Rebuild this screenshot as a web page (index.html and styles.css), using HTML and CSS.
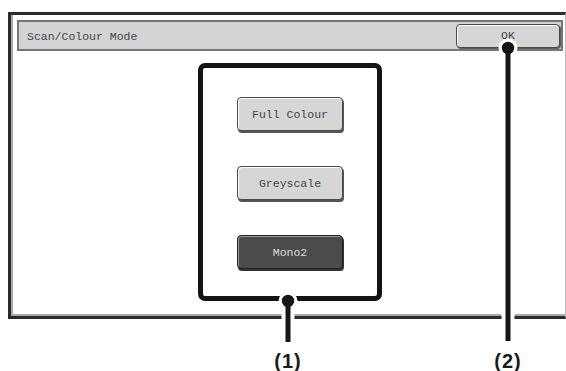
FILE: index.html
```html
<!DOCTYPE html>
<html lang="en">
<head>
	<meta charset="UTF-8">
	<title>Scan/Colour Mode</title>
	<link rel="stylesheet" href="styles.css">
</head>
<body>
	<div id="page">
		<div class="screen">
			<div class="titlebar">
				<span class="title">Scan/Colour Mode</span>
				<span class="btn ok">OK</span>
			</div>
			<div class="stage">
				<div class="group">
					<span class="btn mode">Full Colour</span>
					<span class="btn mode">Greyscale</span>
					<span class="btn mode selected">Mono2</span>
				</div>
			</div>
		</div>

		<!-- callout lines drawn over the screen -->
		<svg class="callouts" width="566" height="371" viewBox="0 0 566 371">
			<g stroke="#fff" stroke-width="13">
				<line x1="288" y1="301" x2="288" y2="342"/>
				<line x1="508" y1="48" x2="508" y2="341"/>
			</g>
			<circle cx="288" cy="301" r="9.5" fill="#fff"/>
			<circle cx="508" cy="48" r="9.5" fill="#fff"/>
			<g stroke="#161616" stroke-width="5">
				<line x1="288" y1="301" x2="288" y2="342"/>
				<line x1="508" y1="48" x2="508" y2="341"/>
			</g>
			<circle cx="288" cy="301" r="6.2" fill="#161616"/>
			<circle cx="508" cy="48" r="6.2" fill="#161616"/>
		</svg>
		<span class="label label1">(1)</span>
		<span class="label label2">(2)</span>
	</div>
</body>
</html>
```

FILE: styles.css
```css
*{
	margin: 0;
	padding: 0;
}
body{
	background: #fff;
	font-family: "Liberation Mono", "DejaVu Sans Mono", monospace;
}
#page{
	width: 566px;
	height: 371px;
	position: relative;
	overflow: hidden;
}
.screen{
	width: 558px;
	box-sizing: border-box;
	margin: 12px 0 0 8px;
	border: 3px solid #2b2b2b;
	border-right: 1px solid #bdbdbd;
	padding: 5px 2px 15px 6px;
	box-shadow: inset 2px -2px 0 #a9a9a9;
}
.titlebar{
	height: 31px;
	box-sizing: border-box;
	border: 2px solid #767676;
	background: #d4d4d4;
	display: flex;
	align-items: center;
	justify-content: space-between;
	padding: 0 1px 0 8px;
	font-size: 11.5px;
	color: #444;
}
.title{
	position: relative;
	top: 1px;
}
.btn{
	display: flex;
	align-items: center;
	justify-content: center;
	box-sizing: border-box;
	border: 1px solid #4a4a4a;
	border-radius: 4px;
	background: #d6d6d6;
	color: #444;
	font-size: 11.5px;
	box-shadow: inset 1px 1px 0 #fff, 1px 1px 0 #5e5e5e;
}
.ok{
	width: 104px;
	height: 24px;
}
.stage{
	margin-top: 12px;
	padding-left: 181px;
}
.group{
	width: 184px;
	height: 238px;
	box-sizing: border-box;
	border: 5px solid #141414;
	border-radius: 7px;
	display: flex;
	flex-direction: column;
	align-items: center;
	padding-top: 29px;
	gap: 35px;
}
.mode{
	width: 106px;
	height: 34px;
	box-shadow: inset 1px 1px 0 #fff, 1px 2px 0 #555;
}
.mode.selected{
	background: #4b4b4b;
	border-color: #222;
	color: #dedede;
	box-shadow: inset 1px 1px 0 #9a9a9a, 1px 2px 0 #333;
}
.callouts{
	position: absolute;
	left: 0;
	top: 0;
}
.label{
	position: absolute;
	top: 350px;
	width: 50px;
	text-align: center;
	font-family: "Liberation Sans", Arial, sans-serif;
	font-weight: bold;
	font-size: 20px;
	letter-spacing: 1px;
	color: #1a1a1a;
}
.label1{
	left: 263px;
}
.label2{
	left: 483px;
}
```
